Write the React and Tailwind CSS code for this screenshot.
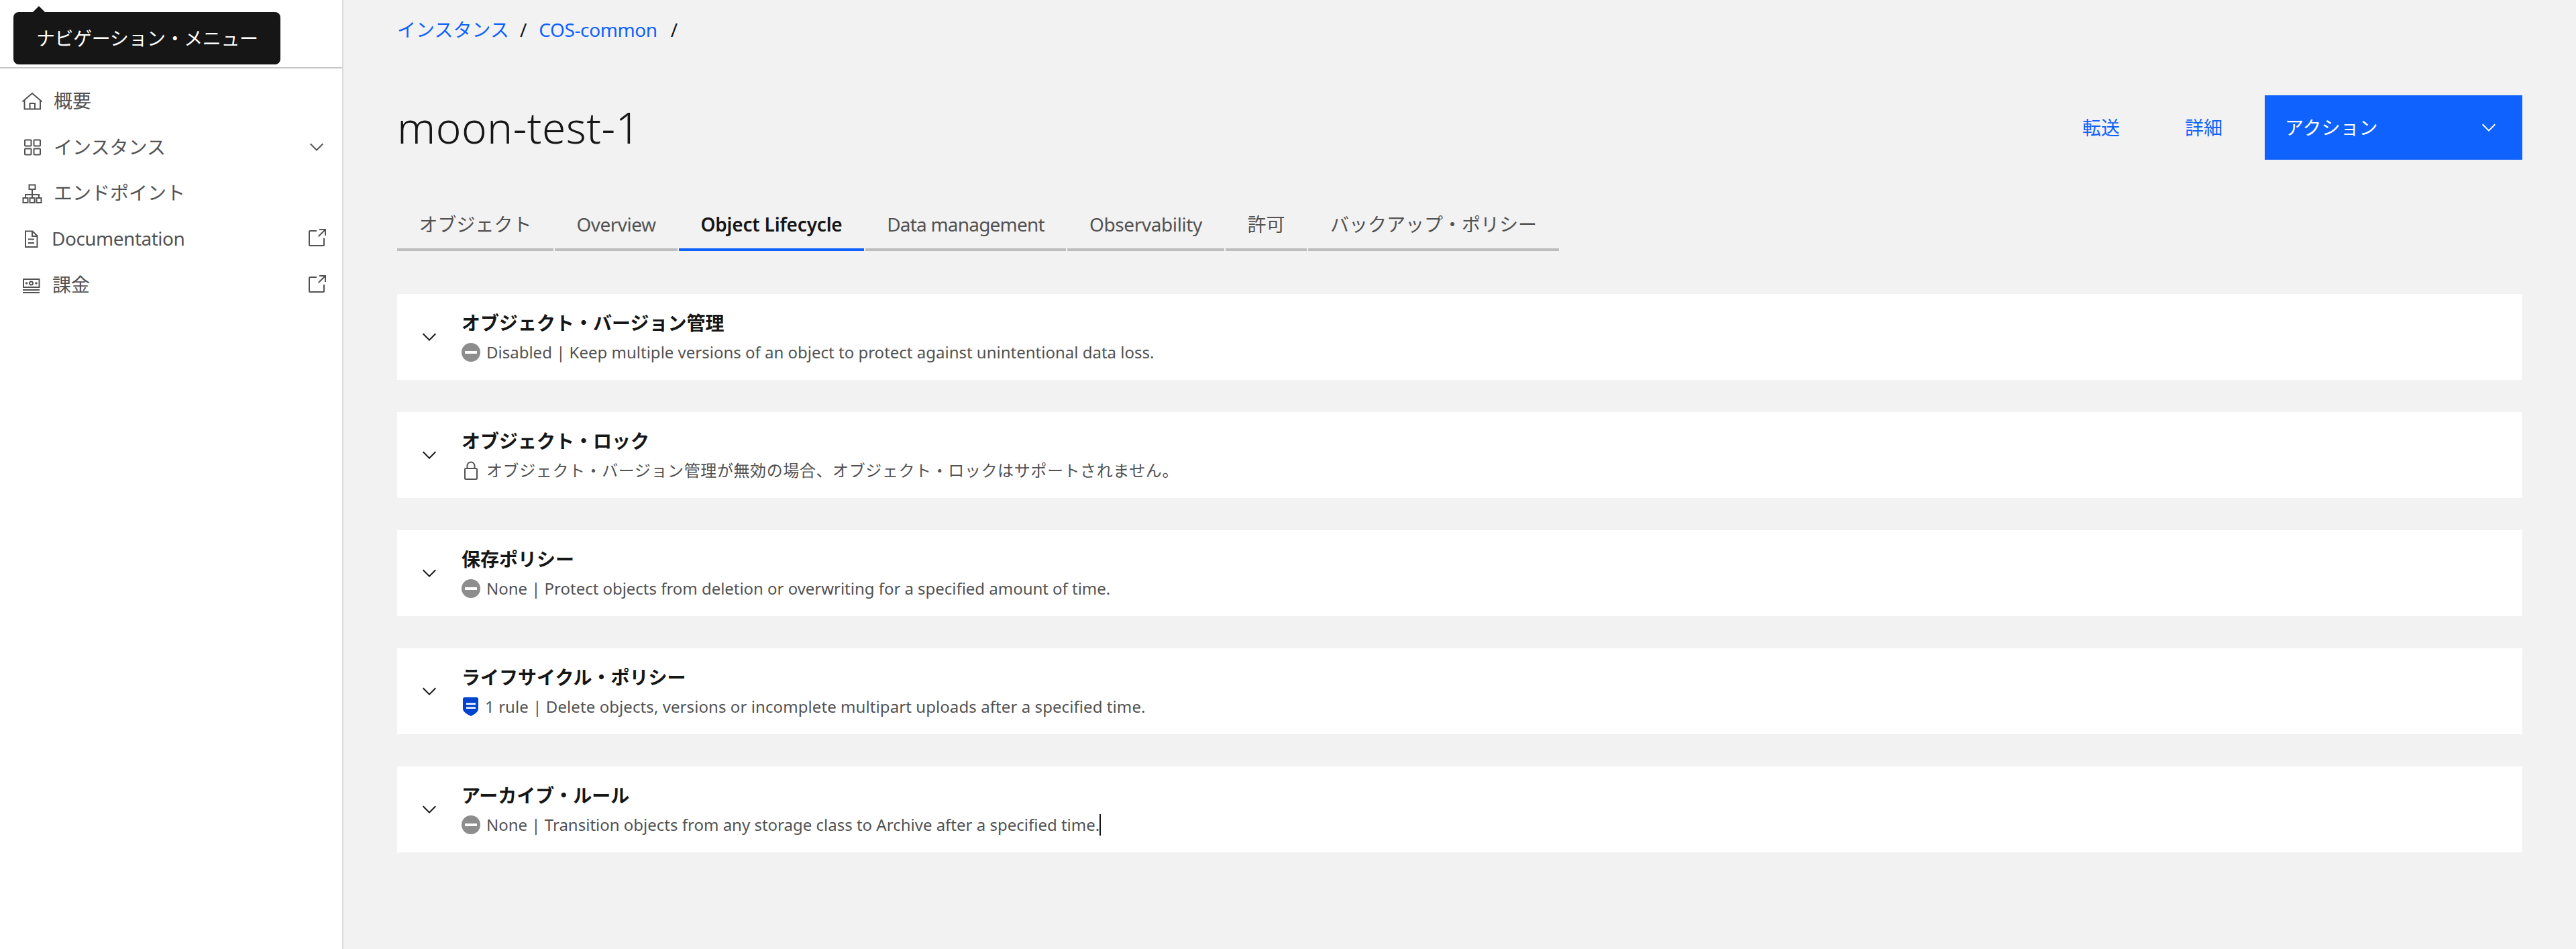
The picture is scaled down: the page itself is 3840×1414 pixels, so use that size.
function Chevron({ className = 'text-[#161616]' }) {
  return (
    <svg width="32" height="32" viewBox="0 0 16 16" fill="currentColor" className={`shrink-0 ${className}`}>
      <path d="M8 11L3 6 3.7 5.3 8 9.6 12.3 5.3 13 6z" />
    </svg>
  );
}

function Launch() {
  return (
    <svg width="32" height="32" viewBox="0 0 16 16" fill="#525252" className="shrink-0 ml-auto">
      <path d="M13 14H3c-.6 0-1-.4-1-1V3c0-.6.4-1 1-1h5v1H3v10h10V8h1v5c0 .6-.4 1-1 1z" />
      <path d="M10 1 10 2 13.3 2 9 6.3 9.7 7 14 2.7 14 6 15 6 15 1z" />
    </svg>
  );
}

function NavIcon({ children }) {
  return (
    <svg width="32" height="32" viewBox="0 0 32 32" fill="none" stroke="#525252" strokeWidth="2" className="shrink-0">
      {children}
    </svg>
  );
}

const HomeIcon = () => (
  <NavIcon>
    <path d="M1.5 17.5 16 5l14.5 12.5" />
    <path d="M4.5 15v13.5h23.5V15" />
    <path d="M12.5 28.5V20H20v8.5" />
  </NavIcon>
);

const GridIcon = () => (
  <NavIcon>
    <rect x="5" y="5.5" width="9.5" height="9" rx="1" />
    <rect x="18.5" y="5.5" width="9.5" height="9" rx="1" />
    <rect x="5" y="18.5" width="9.5" height="9" rx="1" />
    <rect x="18.5" y="18.5" width="9.5" height="9" rx="1" />
  </NavIcon>
);

const NetworkIcon = () => (
  <NavIcon>
    <rect x="11.5" y="4.5" width="9" height="6.5" />
    <path d="M16 11v13M6 24v-5h20v5" />
    <rect x="2.5" y="24" width="7" height="7" />
    <rect x="12.5" y="24" width="7" height="7" />
    <rect x="22.5" y="24" width="7" height="7" />
  </NavIcon>
);

const DocIcon = () => (
  <NavIcon>
    <path d="M6 5.5h10.5L23.500 12.5V29H6z" />
    <path d="M16 5.5V13h7.5M10 17.5h9M10 23h9" />
  </NavIcon>
);

const BillIcon = () => (
  <NavIcon>
    <rect x="3" y="8" width="23.5" height="12" />
    <circle cx="14.5" cy="14" r="2.5" />
    <circle cx="7.5" cy="14" r="0.8" />
    <circle cx="22" cy="14" r="0.8" />
    <path d="M2 24h25M2 28h25" />
  </NavIcon>
);

function DashIcon() {
  return (
    <span className="w-[28px] h-[28px] rounded-full bg-[#8d8d8d] flex items-center justify-center shrink-0">
      <span className="w-[18px] h-[4px] bg-white" />
    </span>
  );
}

function LockIcon() {
  return (
    <svg width="28" height="28" viewBox="0 0 28 28" fill="none" stroke="#525252" strokeWidth="2" className="shrink-0">
      <rect x="5" y="11" width="18" height="16" rx="1.5" />
      <path d="M8.5 11V7a5.5 5.500 0 0 1 11 0v4" />
    </svg>
  );
}

function ShieldIcon() {
  return (
    <svg width="28" height="28" viewBox="0 0 28 28" className="shrink-0">
      <path d="M5 0h18a3 3 0 0 1 2 2v15c0 5-6 8.500-11 11C9 25.500 2 22 2 17V2a3 3 0 0 1 3-2z" fill="#0043ce" />
      <path d="M7 8.500h14v2.500H7zM7 14.500h14v2.500H7z" fill="#fff" />
    </svg>
  );
}

const NAV = [
  { label: '概要', icon: HomeIcon, gap: 'ml-[16px]' },
  { label: 'インスタンス', icon: GridIcon, gap: 'ml-[16px]', chevron: true },
  { label: 'エンドポイント', icon: NetworkIcon, gap: 'ml-[16px]' },
  { label: 'Documentation', icon: DocIcon, gap: 'ml-[13px] tracking-[-0.5px]', external: true },
  { label: '課金', icon: BillIcon, gap: 'ml-[14px]', external: true },
];

const TABS = [
  { label: 'オブジェクト', width: 'w-[233px]' },
  { label: 'Overview', width: 'w-[183px] tracking-[-0.5px]' },
  { label: 'Object Lifecycle', width: 'w-[276px] tracking-[-0.2px]', active: true },
  { label: 'Data management', width: 'w-[299px] tracking-[-0.8px]' },
  { label: 'Observability', width: 'w-[234px] tracking-[-0.4px]' },
  { label: '許可', width: 'w-[121px]' },
  { label: 'バックアップ・ポリシー', width: 'w-[374px]' },
];

const CARDS = [
  { title: 'オブジェクト・バージョン管理', text: 'Disabled | Keep multiple versions of an object to protect against unintentional data loss.', icon: DashIcon, gap: 'ml-[9px]' },
  { title: 'オブジェクト・ロック', text: 'オブジェクト・バージョン管理が無効の場合、オブジェクト・ロックはサポートされません。', icon: LockIcon, gap: 'ml-[9px] tracking-[0.6px]' },
  { title: '保存ポリシー', text: 'None | Protect objects from deletion or overwriting for a specified amount of time.', icon: DashIcon, gap: 'ml-[9px] tracking-[-0.03px]' },
  { title: 'ライフサイクル・ポリシー', text: '1 rule | Delete objects, versions or incomplete multipart uploads after a specified time.', icon: ShieldIcon, gap: 'ml-[7px] tracking-[0.08px]' },
  { title: 'アーカイブ・ルール', text: 'None | Transition objects from any storage class to Archive after a specified time.', icon: DashIcon, gap: 'ml-[9px]', caret: true },
];

export default function App() {
  return (
    <div className="flex w-full h-[1414px] overflow-hidden bg-[#f2f2f2] font-['Noto_Sans','Noto_Sans_CJK_JP',sans-serif] relative">
      {/* Sidebar */}
      <div className="w-[512px] shrink-0 bg-white border-r-2 border-[#dcdcdc]">
        <div className="h-[102px] border-b-2 border-[#c6c6c6]" />
        <div className="pt-[14px] pl-[32px] pr-[22px]">
          {NAV.map(n => {
            const Icon = n.icon;
            return (
              <div key={n.label} className="h-[68.4px] flex items-center text-[28px] text-[#525252]">
                <Icon />
                <span className={n.gap}>{n.label}</span>
                {n.chevron && <span className="ml-auto"><Chevron className="text-[#525252]" /></span>}
                {n.external && <Launch />}
              </div>
            );
          })}
        </div>
      </div>

      {/* Tooltip */}
      <div className="absolute left-[20px] top-[18px] w-[398px] h-[78px] bg-[#161616] rounded-[8px] flex items-center pl-[34px] text-[28px] tracking-[-0.4px] text-white">
        <span className="absolute left-[29px] top-[-9px] w-0 h-0 border-l-[9px] border-r-[9px] border-b-[9px] border-l-transparent border-r-transparent border-b-[#161616]" />
        ナビゲーション・メニュー
      </div>

      {/* Main */}
      <div className="flex-1 px-[80px] pt-[24px]">
        <div className="h-[40px] flex items-center text-[28px] leading-none">
          <span className="text-[#0f62fe]">インスタンス</span>
          <span className="text-[#161616] ml-[16px] mr-[18px]">/</span>
          <span className="text-[#0f62fe] tracking-[-0.4px]">COS-common</span>
          <span className="text-[#161616] ml-[20px]">/</span>
        </div>

        <div className="mt-[78px] h-[96px] flex items-center justify-between">
          <h1 className="text-[64px] font-light text-[#161616] leading-none tracking-[0.45px]">moon-test-1</h1>
          <div className="flex items-center text-[28px] text-[#0f62fe]">
            <span className="mr-[97px]">転送</span>
            <span className="mr-[63px]">詳細</span>
            <div className="w-[384px] h-[96px] bg-[#0f62fe] text-white flex items-center justify-between pl-[30px] pr-[34px]">
              <span>アクション</span>
              <Chevron className="text-white" />
            </div>
          </div>
        </div>

        <div className="mt-[60px] flex gap-[2px]">
          {TABS.map(t => (
            <div
              key={t.label}
              className={`${t.width} h-[76px] box-border flex items-center justify-center border-b-4 text-[28px] ${t.active ? 'border-[#0f62fe] font-semibold text-[#161616]' : 'border-[#bdbdbd] text-[#525252]'}`}
            >
              {t.label}
            </div>
          ))}
        </div>

        <div className="mt-[64px] flex flex-col gap-[48px]">
          {CARDS.map(c => {
            const Icon = c.icon;
            return (
              <div key={c.title} className="h-[128px] bg-white flex items-center pl-[32px]">
                <Chevron />
                <div className="ml-[32px]">
                  <div className="h-[40px] flex items-center text-[28px] font-semibold text-[#161616]">{c.title}</div>
                  <div className="mt-[6px] h-[36px] flex items-center text-[24px] text-[#525252]">
                    <Icon />
                    <span className={c.gap}>{c.text}</span>
                    {c.caret && <span className="w-[2px] h-[32px] bg-[#161616]" />}
                  </div>
                </div>
              </div>
            );
          })}
        </div>
      </div>
    </div>
  );
}
